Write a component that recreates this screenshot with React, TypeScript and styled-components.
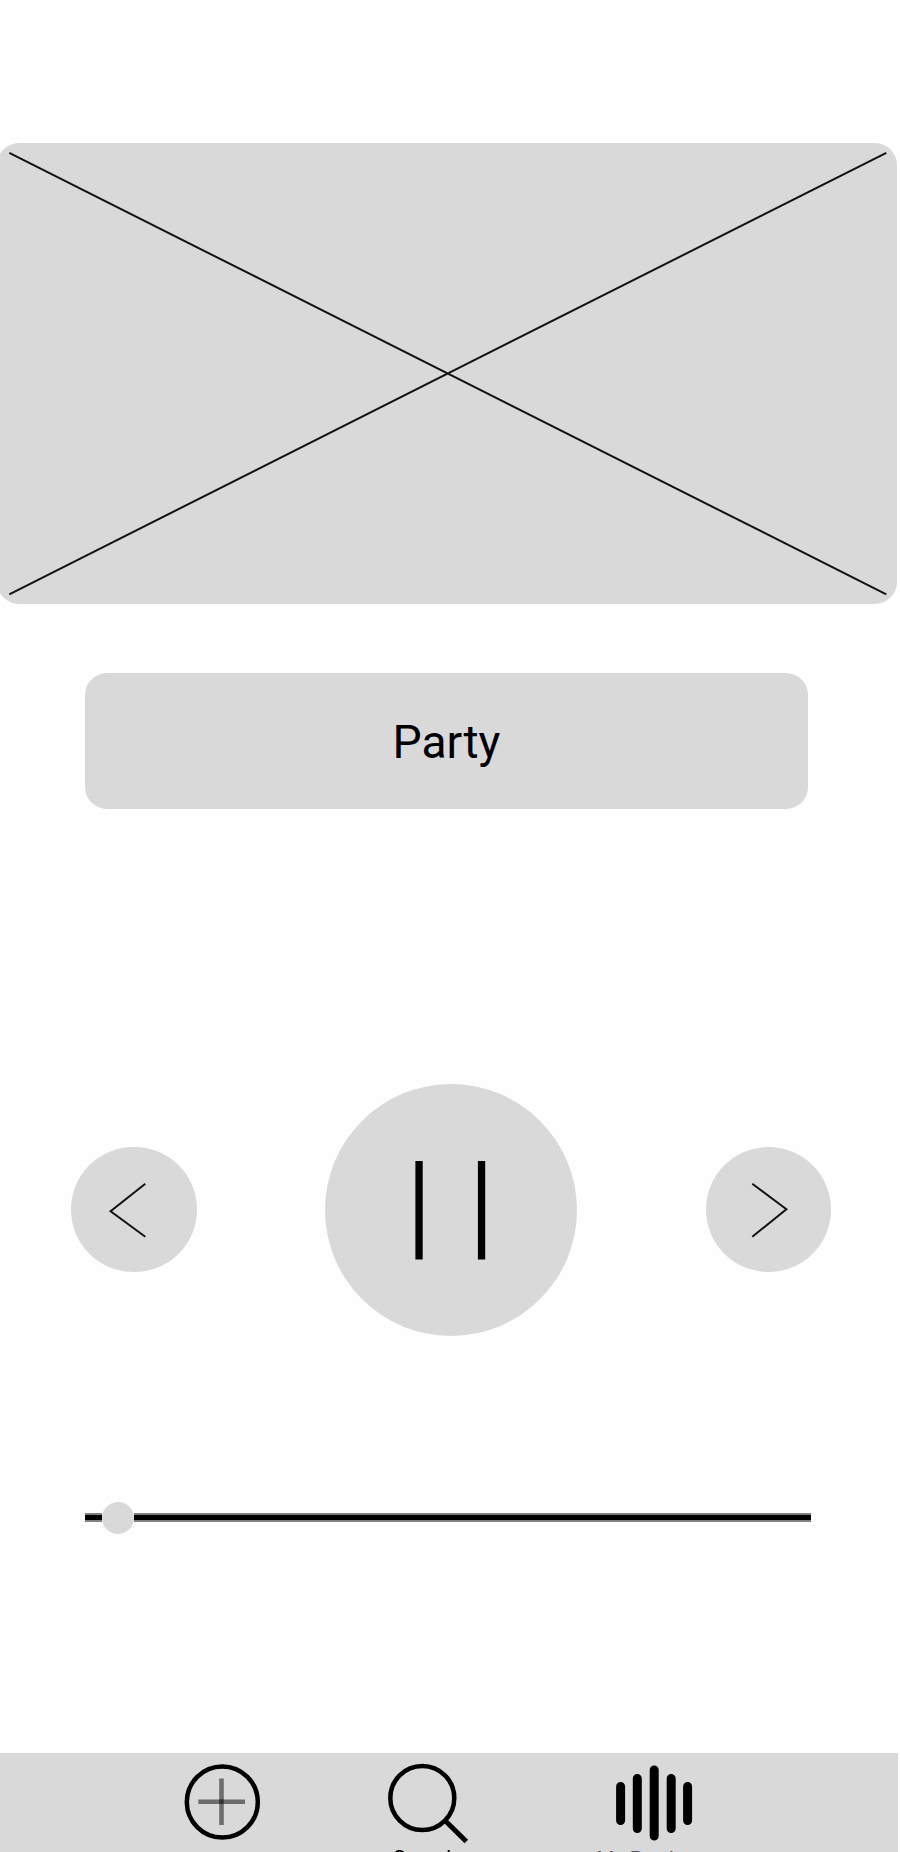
import React from "react";
import styled, { createGlobalStyle } from "styled-components";

const GlobalStyle = createGlobalStyle`
  html, body { margin: 0; padding: 0; background: #fefefe; overflow: hidden; }
  * { box-sizing: border-box; }
  button { border: 0; padding: 0; color: #000; font-family: Roboto, sans-serif; }
  svg { display: block; flex: none; }
`;

const Screen = styled.main`
  display: flex;
  flex-direction: column;
  width: 900px;
  height: 1852px;
  padding-top: 142.5px;
  overflow: hidden;
  background: #fefefe;
  font-family: Roboto, sans-serif;
`;

const Cover = styled.section`
  flex: none;
  width: 900.6px;
  height: 461.3px;
  margin-left: -3.3px;
  border-radius: 22px;
  background: #d9d9d9;
`;

const Genre = styled.button`
  flex: none;
  width: 722.4px;
  height: 136px;
  margin: 69.2px 0 0 85.3px;
  padding-top: 3px;
  border-radius: 22px;
  background: #d9d9d9;
  font-size: 46.2px;
`;

const Controls = styled.div`
  display: flex;
  flex: none;
  align-items: center;
  justify-content: space-between;
  width: 759.8px;
  margin: 274.6px 0 0 71.2px;
`;

const RoundButton = styled.button<{ $size: number }>`
  display: flex;
  align-items: center;
  justify-content: center;
  flex: none;
  width: ${({ $size }) => $size}px;
  height: ${({ $size }) => $size}px;
  border-radius: 50%;
  background: #d9d9d9;
`;

const Seek = styled.div`
  display: flex;
  align-items: center;
  flex: none;
  width: 726px;
  height: 32px;
  margin: 166px 0 0 85.3px;
`;

const Track = styled.div<{ $width?: number }>`
  flex: ${({ $width }) => ($width ? `0 0 ${$width}px` : "1")};
  height: 9px;
  border: solid #808080;
  border-width: 2px 0;
  background: #000;
`;

const Knob = styled.div`
  flex: none;
  width: 32px;
  height: 32px;
  border-radius: 50%;
  background: #d9d9d9;
`;

const NavBar = styled.nav`
  display: grid;
  grid-template-columns: 84px 96px 104px;
  column-gap: 117px;
  flex: none;
  width: 897.6px;
  height: 140px;
  margin-top: auto;
  margin-bottom: -41px;
  padding: 10px 0 0 180px;
  background: #d9d9d9;
`;

const NavItem = styled.div`
  display: flex;
  flex-direction: column;
  align-items: center;
`;

const NavLabel = styled.span<{ $muted?: boolean }>`
  margin-top: ${({ $muted }) => ($muted ? 0 : -1)}px;
  padding-right: ${({ $muted }) => ($muted ? 0 : 7)}px;
  font-size: 21px;
  line-height: 25px;
  white-space: nowrap;
  color: ${({ $muted }) => ($muted ? "#555" : "#000")};
`;

export default function App() {
  return (
    <>
      <GlobalStyle />
      <Screen>
        <Cover>
          <svg width="900.6" height="461.3" fill="none" stroke="#111" strokeWidth="2">
            <path d="M12.3 9.8 889.3 451.3M12.3 451.3 889.3 9.8" />
          </svg>
        </Cover>
        <Genre>Party</Genre>
        <Controls>
          <RoundButton $size={125.4} aria-label="Previous">
            <svg width="126" height="126" fill="none" stroke="#111" strokeWidth="2">
              <path d="M74.3 36.8 39.6 64.2 74.3 89.8" />
            </svg>
          </RoundButton>
          <RoundButton $size={252.4} aria-label="Pause">
            <svg width="252.4" height="252.4">
              <path d="M90.4 77h7.3v98.4h-7.3zM152.9 77h7.3v98.4h-7.3z" />
            </svg>
          </RoundButton>
          <RoundButton $size={125.4} aria-label="Next">
            <svg width="126" height="126" fill="none" stroke="#111" strokeWidth="2">
              <path d="M47.3 36.8 81.4 62.2 47.3 89.8" />
            </svg>
          </RoundButton>
        </Controls>
        <Seek>
          <Track $width={16.6} />
          <Knob />
          <Track />
        </Seek>
        <NavBar>
          <NavItem>
            <svg width="84" height="84" fill="none">
              <circle cx="42.3" cy="39" r="35.5" stroke="#000" strokeWidth="4.5" />
              <path d="M41.5 15.5V62M18.3 38.7H65" stroke="#6d6d6d" strokeWidth="4.6" />
              <path d="M39.2 36.4h4.6V41h-4.6z" fill="#333" />
            </svg>
          </NavItem>
          <NavItem>
            <svg width="96" height="84" fill="none" stroke="#000">
              <circle cx="41.3" cy="35" r="32" strokeWidth="4.5" />
              <path d="m63.5 57 21.8 21.5" strokeWidth="5" />
            </svg>
            <NavLabel>Search</NavLabel>
          </NavItem>
          <NavItem>
            <svg width="104" height="84" stroke="#000" strokeWidth="9" strokeLinecap="round">
              <path d="M26.6 23.5v34M43.3 15.5v50M60.2 7v66M77.2 15.5v50M93.6 23.5v34" />
            </svg>
            <NavLabel $muted>My Parties</NavLabel>
          </NavItem>
        </NavBar>
      </Screen>
    </>
  );
}
